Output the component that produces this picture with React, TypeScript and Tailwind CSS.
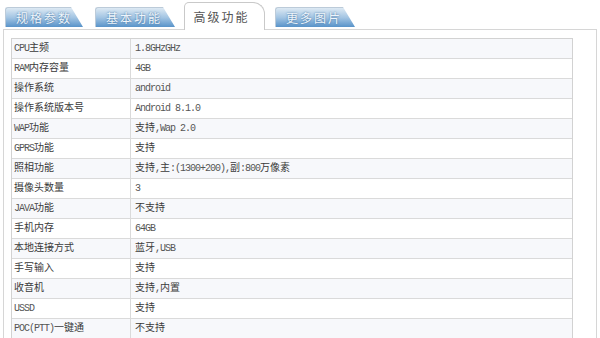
import React from "react";

const ROWS: [string, string][] = [
  ["CPU主频", "1.8GHzGHz"],
  ["RAM内存容量", "4GB"],
  ["操作系统", "android"],
  ["操作系统版本号", "Android 8.1.0"],
  ["WAP功能", "支持,Wap 2.0"],
  ["GPRS功能", "支持"],
  ["照相功能", "支持,主:(1300+200),副:800万像素"],
  ["摄像头数量", "3"],
  ["JAVA功能", "不支持"],
  ["手机内存", "64GB"],
  ["本地连接方式", "蓝牙,USB"],
  ["手写输入", "支持"],
  ["收音机", "支持,内置"],
  ["USSD", "支持"],
  ["POC(PTT)一键通", "不支持"],
];

// ascii runs are set tighter so they sit at half the width of a CJK glyph
function Txt({ s }: { s: string }) {
  return (
    <>
      {s.split(/([\x20-\x7e]+)/).map((p, i) =>
        /[\x20-\x7e]/.test(p) ? (
          <span key={i} className="tracking-[-1px] text-[#555]">
            {p}
          </span>
        ) : (
          <span key={i}>{p}</span>
        )
      )}
    </>
  );
}

function Tab({ label, width }: { label: string; width: string }) {
  return (
    <div
      className={`${width} h-[20px] mb-[2px] flex items-center pl-[10px] border-t border-l border-[#bccbd9] rounded-tl-[3px] bg-gradient-to-b from-[#dde9f3] via-[#a3c5e3] to-[#5893c9] text-[12px] tracking-[2px] text-[#eef5fb] [text-shadow:0_0_2px_#3a6a99] [clip-path:polygon(0_0,calc(100%-12px)_0,100%_100%,0_100%)]`}
    >
      {label}
    </div>
  );
}

export default function App() {
  return (
    <div className="w-[600px] h-[338px] overflow-hidden bg-white font-['Noto_Sans_CJK_SC',sans-serif]">
      <div className="flex items-end h-[29px] pl-[5px]">
        <Tab label="规格参数" width="w-[78px]" />
        <div className="w-[12px]" />
        <Tab label="基本功能" width="w-[80px]" />
        <div className="w-[9px]" />
        <div className="relative z-10 w-[81px] h-[28px] -mb-[1px] bg-white border-t border-l border-r border-[#c9c9c9] rounded-tl-[5px] rounded-tr-[12px] flex items-center justify-center pr-[6px] text-[12px] tracking-[2px] text-[#555]">
          高级功能
        </div>
        <div className="w-[10px]" />
        <Tab label="更多图片" width="w-[80px]" />
      </div>
      <div className="ml-[3px] w-[594px] h-[320px] border-t border-l border-r border-[#d6d6d6] pl-[7px] pt-[8px]">
        <div className="w-[562px] border-t border-l border-r border-[#d2d2d2] font-['Liberation_Mono','Noto_Sans_CJK_SC',monospace] text-[10px] text-[#3a3a3a]">
          {ROWS.map(([k, v], i) => (
            <div
              key={k}
              className={`flex h-[20px] border-b border-[#dadada] ${
                i % 2 === 0 ? "bg-[#f7f8fb]" : "bg-white"
              }`}
            >
              <div className="w-[119px] flex items-center pl-[2px] border-r border-[#dadada] whitespace-nowrap">
                <Txt s={k} />
              </div>
              <div className="flex-1 flex items-center pl-[4px] whitespace-nowrap">
                <Txt s={v} />
              </div>
            </div>
          ))}
        </div>
      </div>
    </div>
  );
}
